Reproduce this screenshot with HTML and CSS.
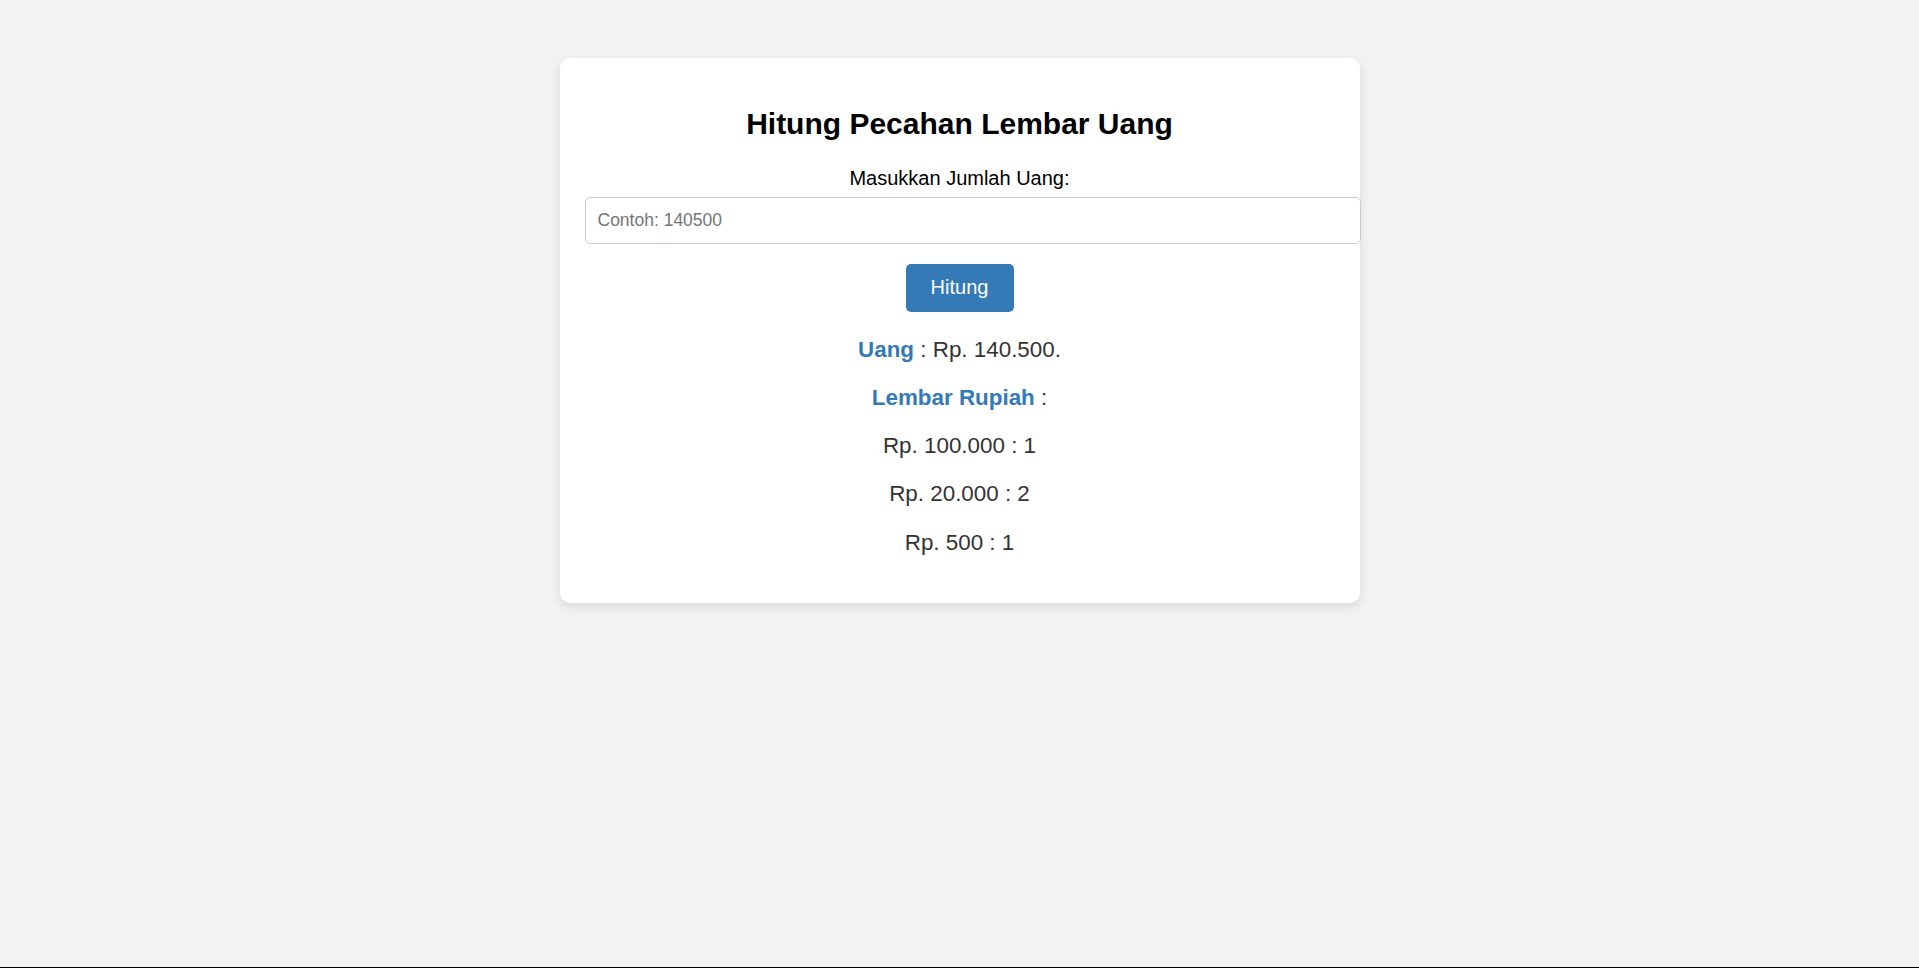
FILE: index.html
```html
<!DOCTYPE html>
<html lang="id">
<head>
<meta charset="utf-8">
<title>Hitung Pecahan Lembar Uang</title>
<link rel="stylesheet" href="styles.css">
</head>
<body>
<div class="card">
  <h1 class="title">Hitung Pecahan Lembar Uang</h1>
  <label class="label" for="jumlah">Masukkan Jumlah Uang:</label>
  <input class="input" id="jumlah" type="text" placeholder="Contoh: 140500">
  <button class="btn" type="button">Hitung</button>
  <div class="result">
    <p class="line"><span class="key">Uang</span> : Rp. 140.500.</p>
    <p class="line"><span class="key">Lembar Rupiah</span> :</p>
    <p class="line">Rp. 100.000 : 1</p>
    <p class="line">Rp. 20.000 : 2</p>
    <p class="line">Rp. 500 : 1</p>
  </div>
</div>
<div class="edge"></div>
</body>
</html>
```
FILE: styles.css
```css
html, body {
  height: 100%;
}
body {
  margin: 0;
  padding-top: 58px;
  box-sizing: border-box;
  background: #f2f2f2;
  font-family: "Liberation Sans", Arial, sans-serif;
}
.card {
  width: 750px;
  margin: 0 auto;
  padding: 25px 25px 25px;
  background: #fff;
  border-radius: 10px;
  box-shadow: 0 4px 10px rgba(0, 0, 0, 0.1);
  text-align: center;
}
.title {
  font-size: 30px;
  line-height: 34.5px;
  font-weight: bold;
  color: #000;
  margin: 24px 0 25px;
}
.label {
  display: block;
  font-size: 20px;
  line-height: 23px;
  color: #000;
  margin-bottom: 7px;
}
.input {
  display: block;
  width: 100%;
  padding: 12.5px 12px;
  font-size: 17.5px;
  line-height: 20px;
  font-family: "Liberation Sans", Arial, sans-serif;
  border: 1px solid #ccc;
  border-radius: 5px;
  margin: 0 0 20px;
  color: #333;
  background: #fff;
  text-align: left;
}
.input::placeholder {
  color: #757575;
}
.btn {
  display: block;
  margin: 0 auto;
  background: #337ab7;
  color: #fff;
  border: none;
  border-radius: 5px;
  font-size: 20px;
  font-family: "Liberation Sans", Arial, sans-serif;
  padding: 0;
  height: 48px;
  width: 108px;
  cursor: pointer;
}
.result {
  color: #333;
  padding-top: 3px;
}
.line {
  font-size: 22.4px;
  line-height: 25.76px;
  margin: 22.4px 0;
}
.key {
  color: #337ab7;
  font-weight: bold;
}
.edge {
  position: fixed;
  left: 0;
  right: 0;
  bottom: 0;
  height: 1px;
  background: #000;
}
```
